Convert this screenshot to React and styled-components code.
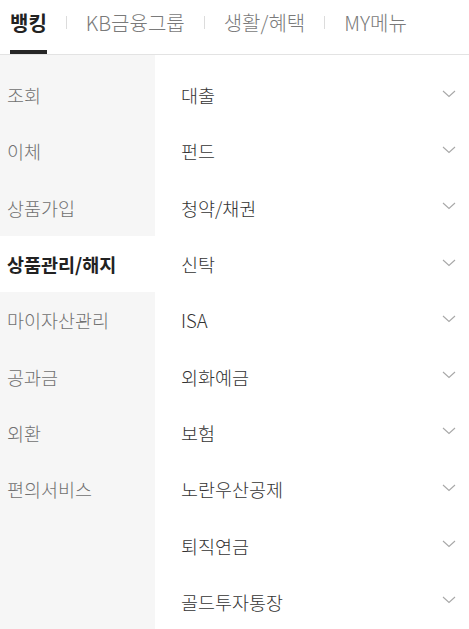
import React, { useState } from "react";
import styled, { createGlobalStyle } from "styled-components";

const GlobalStyle = createGlobalStyle`
  html, body {
    margin: 0;
    padding: 0;
    background: #fff;
  }
  body {
    font-family: "Noto Sans CJK KR", "Noto Sans", sans-serif;
    -webkit-font-smoothing: antialiased;
  }
`;

const categories = [
  "조회",
  "이체",
  "상품가입",
  "상품관리/해지",
  "마이자산관리",
  "공과금",
  "외환",
  "편의서비스",
];

const subMenus = [
  "대출",
  "펀드",
  "청약/채권",
  "신탁",
  "ISA",
  "외화예금",
  "보험",
  "노란우산공제",
  "퇴직연금",
  "골드투자통장",
];

const tabs = ["뱅킹", "KB금융그룹", "생활/혜택", "MY메뉴"];

const Page = styled.div`
  width: 100%;
  min-height: 629px;
  display: flex;
  flex-direction: column;
`;

const TabBar = styled.nav`
  height: 54px;
  display: flex;
  align-items: stretch;
  padding: 0 10px;
  border-bottom: 1px solid #e3e3e3;
  box-sizing: content-box;
`;

const Tab = styled.button`
  position: relative;
  display: flex;
  align-items: center;
  padding: 0 0 9px;
  border: none;
  background: none;
  font-family: inherit;
  font-size: 20px;
  font-weight: ${(p) => (p.$active ? 700 : 300)};
  color: ${(p) => (p.$active ? "#222" : "#7a7a7a")};
  cursor: pointer;

  &::after {
    content: "";
    display: ${(p) => (p.$active ? "block" : "none")};
    position: absolute;
    left: 0;
    right: 0;
    bottom: 0;
    height: 4px;
    background: #262626;
  }
`;

const Divider = styled.span`
  align-self: center;
  width: 1px;
  height: 13px;
  margin: 0 19px 9px;
  background: #dcdcdc;
`;

const Body = styled.div`
  flex: 1;
  display: grid;
  grid-template-columns: 155px 1fr;
`;

const SideMenu = styled.ul`
  margin: 0;
  padding: 12px 0 0;
  list-style: none;
  background: #f6f6f6;
`;

const SideItem = styled.li`
  height: 56.3px;
  display: flex;
  align-items: center;
  padding: 0 7px;
  font-size: 18.5px;
  background: ${(p) => (p.$active ? "#fff" : "transparent")};
  color: ${(p) => (p.$active ? "#222" : "#707070")};
  font-weight: ${(p) => (p.$active ? 700 : 300)};
  cursor: pointer;
`;

const SubMenu = styled.ul`
  margin: 0;
  padding: 12px 0 0;
  list-style: none;
`;

const SubItem = styled.li`
  height: 56.3px;
  display: flex;
  align-items: center;
  justify-content: space-between;
  padding: 0 13px 0 26px;
  font-size: 18.5px;
  font-weight: 300;
  color: #333;
  cursor: pointer;
`;

const Chevron = () => (
  <svg width="14" height="8" viewBox="0 0 14 8" fill="none" style={{ marginTop: -3 }}>
    <path d="M1 1l6 5.5L13 1" stroke="#a8a8a8" strokeWidth="1.1" />
  </svg>
);

const App = () => {
  const [activeTab, setActiveTab] = useState(0);
  const [activeCategory, setActiveCategory] = useState(3);

  return (
    <Page>
      <GlobalStyle />
      <TabBar>
        {tabs.map((tab, index) => (
          <React.Fragment key={tab}>
            {index > 0 && <Divider />}
            <Tab $active={activeTab === index} onClick={() => setActiveTab(index)}>
              {tab}
            </Tab>
          </React.Fragment>
        ))}
      </TabBar>
      <Body>
        <SideMenu>
          {categories.map((name, index) => (
            <SideItem
              key={name}
              $active={activeCategory === index}
              onClick={() => setActiveCategory(index)}
            >
              {name}
            </SideItem>
          ))}
        </SideMenu>
        <SubMenu>
          {subMenus.map((name) => (
            <SubItem key={name}>
              {name}
              <Chevron />
            </SubItem>
          ))}
        </SubMenu>
      </Body>
    </Page>
  );
};

export default App;
